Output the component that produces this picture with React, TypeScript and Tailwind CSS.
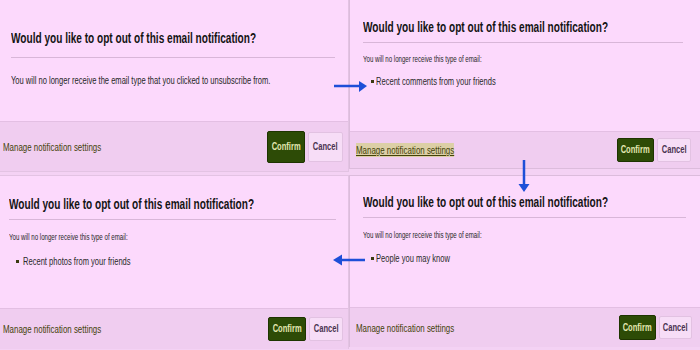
import React from 'react';

// squeezed text: the source screenshot is compressed horizontally
const Sq = ({ children, className = '' }: { children: React.ReactNode; className?: string }) => (
  <span className={`inline-block origin-left scale-x-[0.72] whitespace-nowrap ${className}`}>{children}</span>
);

type Footer = {
  box: string;
  confirm: string;
  cancel: string;
  underline?: boolean;
};

const PanelFooter = ({ box, confirm, cancel, underline }: Footer) => (
  <div className={`flex items-center justify-between border-t border-[#e3bfe3] bg-[#f0cdf0] ${box}`}>
    <span className="text-[11px] leading-[14px] text-[#44420a]">
      <Sq className={underline ? 'bg-[#dccfa6] underline' : ''}>Manage notification settings</Sq>
    </span>
    <div className="flex items-center gap-[3px]">
      <button
        type="button"
        className={`flex items-center justify-center rounded-[2px] border border-[#1e3400] bg-[#2d4b06] text-[10.5px] font-bold text-[#e2e6b0] ${confirm}`}
      >
        <span className="inline-block scale-x-[0.72]">Confirm</span>
      </button>
      <button
        type="button"
        className={`flex items-center justify-center rounded-[2px] border border-[#e2c2e2] bg-[#f7ddf7] text-[10.5px] font-bold text-[#4a3350] ${cancel}`}
      >
        <span className="inline-block scale-x-[0.72]">Cancel</span>
      </button>
    </div>
  </div>
);

const Title = () => (
  <h2 className="h-[17px] text-[14px] leading-[17px] font-bold text-[#141414]">
    <Sq className="scale-x-[0.71]">Would you like to opt out of this email notification?</Sq>
  </h2>
);

const Bullet = ({ text, box }: { text: string; box: string }) => (
  <div className={`flex h-[14px] items-center ${box}`}>
    <span className="h-[3px] w-[3px] bg-[#3b3a10]" />
    <span className="text-[10.5px] leading-[14px] text-[#2a2a2a]">
      <Sq>{text}</Sq>
    </span>
  </div>
);

const Intro = ({ box }: { box: string }) => (
  <p className={`h-[12px] text-[9.5px] leading-[12px] text-[#262626] ${box}`}>
    <Sq className="scale-x-[0.645]">You will no longer receive this type of email:</Sq>
  </p>
);

export default function App() {
  return (
    <div className="relative flex h-[350px] w-[700px] overflow-hidden bg-[#f4d2f4] font-['Liberation_Sans',Arial,sans-serif]">
      {/* left column */}
      <div className="flex w-[349px] flex-col gap-[3px]">
        <div className="flex h-[172px] flex-col border-r border-b border-[#e3c3e3] bg-[#fcd9fc]">
          <div className="h-[121px] pt-[30px] pr-[13px] pl-[11px]">
            <Title />
            <div className="mt-[10px] h-px bg-[#d8b6d8]" />
            <p className="mt-[15px] h-[14px] text-[10.5px] leading-[14px] text-[#262626]">
              <Sq>You will no longer receive the email type that you clicked to unsubscribe from.</Sq>
            </p>
          </div>
          <PanelFooter box="flex-1 pr-[5px] pl-[3px]" confirm="h-[32px] w-[38px]" cancel="h-[30px] w-[35px]" />
        </div>

        <div className="flex h-[174px] flex-col border-t border-r border-[#e3c3e3] bg-[#fcd9fc]">
          <div className="h-[132px] pt-[20px] pr-[12px] pl-[9px]">
            <Title />
            <div className="mt-[6px] h-px bg-[#d8b6d8]" />
            <Intro box="mt-[11px]" />
            <Bullet text="Recent photos from your friends" box="mt-[11px] gap-[4px] pl-[7px]" />
          </div>
          <PanelFooter box="flex-1 pr-[5px] pl-[3px]" confirm="h-[24px] w-[38px]" cancel="h-[24px] w-[34px]" />
        </div>
      </div>

      {/* right column */}
      <div className="flex w-[351px] flex-col gap-[6px]">
        <div className="flex h-[169px] flex-col border-b border-l border-[#dcbcdc] bg-[#fcd9fc]">
          <div className="h-[131px] pt-[19px] pr-[17px] pl-[13px]">
            <Title />
            <div className="mt-[6px] h-px bg-[#d8b6d8]" />
            <Intro box="mt-[10px]" />
            <Bullet text="Recent comments from your friends" box="mt-[9px] gap-[2px] pl-[8px]" />
          </div>
          <PanelFooter
            box="flex-1 pr-[9px] pl-[6px]"
            confirm="h-[24px] w-[37px]"
            cancel="h-[24px] w-[34px]"
            underline
          />
        </div>

        <div className="flex h-[172px] flex-col border-t border-l border-[#dcbcdc] bg-[#fcd9fc]">
          <div className="h-[131px] pt-[18px] pr-[14px] pl-[13px]">
            <Title />
            <div className="mt-[6px] h-px bg-[#d8b6d8]" />
            <Intro box="mt-[11px]" />
            <Bullet text="People you may know" box="mt-[10px] gap-[2px] pl-[8px]" />
          </div>
          <PanelFooter box="flex-1 pr-[8px] pl-[6px]" confirm="h-[25px] w-[37px]" cancel="h-[23px] w-[33px]" />
        </div>
      </div>

      {/* flow arrows */}
      <svg className="pointer-events-none absolute inset-0" width="700" height="350" viewBox="0 0 700 350">
        <g fill="#1d4fd8" stroke="#1d4fd8">
          <line x1="334" y1="86" x2="361" y2="86" strokeWidth="2.5" />
          <polygon points="367,86 359,81 359,92" stroke="none" />
          <line x1="524" y1="160" x2="524" y2="186" strokeWidth="2.5" />
          <polygon points="524,192 518.5,184 529.5,184" stroke="none" />
          <line x1="340" y1="260" x2="365" y2="260" strokeWidth="2.5" />
          <polygon points="333,260 342,254.5 342,265.5" stroke="none" />
        </g>
      </svg>
    </div>
  );
}
